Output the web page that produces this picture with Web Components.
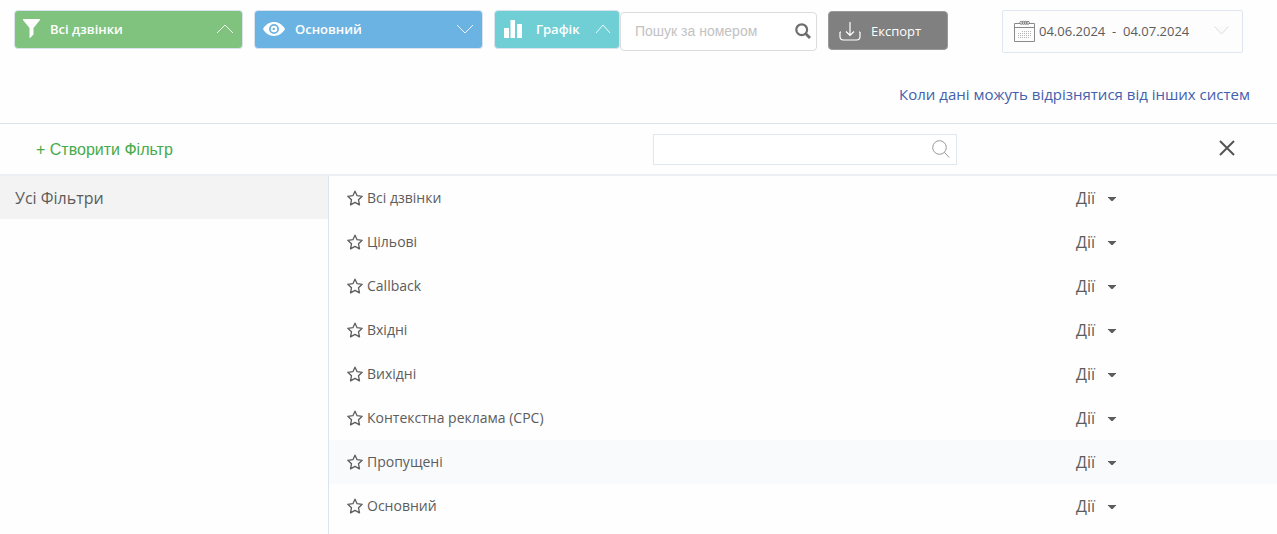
<!DOCTYPE html>
<html lang="uk">
<head>
<meta charset="utf-8">
<meta name="viewport" content="width=device-width, initial-scale=1">
<title>Дзвінки</title>
<style>
  html, body { margin: 0; background: #fefefe; }
  body { font-family: "Open Sans", "Noto Sans", sans-serif; color: #5c5c5c; }
</style>
</head>
<body>
<calls-page></calls-page>

<script>
  class BaseElement extends HTMLElement {
    connectedCallback() {
      if (this.shadowRoot) return;
      this.attachShadow({ mode: 'open' }).innerHTML =
        '<style>*{box-sizing:border-box}button,input{font:inherit;color:inherit;margin:0}svg{display:block;flex:none}</style>' + this.render();
    }
  }

  /* Coloured drop-down button of the toolbar */
  customElements.define('toolbar-toggle', class extends BaseElement {
    render() {
      const up = this.getAttribute('direction') === 'up';
      const small = this.hasAttribute('compact');
      const w = small ? 16 : 18;
      const d = up ? `M1 9 L${w / 2} 1 L${w - 1} 9` : `M1 1 L${w / 2} 9 L${w - 1} 1`;
      return `
      <style>
        :host { display: block; }
        button { display: flex; align-items: center; gap: var(--gap, 12px); width: 100%; height: 39px; padding: 0 8px 2px;
          border: 1px solid #dbe3ef; border-radius: 4px; background: var(--fill); color: #fff;
          font-size: 13px; font-weight: 600; line-height: 20px; text-align: left; cursor: pointer; }
        .chevron { margin-left: auto; }
      </style>
      <button type="button" aria-expanded="${up}">
        <slot name="icon"></slot><span><slot></slot></span>
        <svg class="chevron" width="${w}" height="10" viewBox="0 0 ${w} 10" fill="none" stroke="#fff" stroke-width=".9"><path d="${d}"/></svg>
      </button>`;
    }
  });

  customElements.define('phone-search', class extends BaseElement {
    render() {
      return `
      <style>
        :host { display: block; }
        label { display: flex; align-items: center; height: 39px; padding: 0 5px 2px 14px; border: 1px solid #dcdcdc; border-radius: 4px; background: #fff; }
        input { flex: 1; min-width: 0; border: 0; padding: 0; outline: 0; background: none; font: 14px/20px "Liberation Sans", Arial, sans-serif; }
        input::placeholder { color: #c2c2c2; opacity: 1; }
      </style>
      <label>
        <input type="text" placeholder="Пошук за номером" aria-label="Пошук за номером">
        <svg width="16" height="16" viewBox="0 0 16 16" fill="none" stroke="#6e6e6e"><circle cx="6.7" cy="6.7" r="5.4" stroke-width="2.2"/><path d="M10.8 10.8 L15 15" stroke-width="2.8"/></svg>
      </label>`;
    }
  });

  customElements.define('export-button', class extends BaseElement {
    render() {
      return `
      <style>
        :host { display: block; }
        button { display: flex; align-items: center; gap: 10px; width: 100%; height: 39px; padding: 0 10px; border: 1px solid #999;
          border-radius: 4px; background: #808080; color: #fff; font-size: 13px; line-height: 20px; cursor: pointer; }
      </style>
      <button type="button">
        <svg width="22" height="20" viewBox="0 0 22 20" fill="none" stroke="#fff" stroke-width="1.2"><path d="M1 11 V15.5 Q1 19 4.5 19 H17.5 Q21 19 21 15.5 V11 M1 11 H2 M21 11 H20 M11 1 V14.5 M7 10.5 L11 14.5 L15 10.5"/></svg>
        <slot></slot>
      </button>`;
    }
  });

  customElements.define('date-range', class extends BaseElement {
    render() {
      let dots = '';
      for (let y = 11; y <= 17; y += 2)
        for (let x = 4; x <= 17; x += 2)
          if (!(y === 11 && x < 8) && !(y === 17 && x > 14)) dots += `<rect x="${x}" y="${y}" width="1" height="1"/>`;
      return `
      <style>
        :host { display: block; }
        button { display: flex; align-items: center; width: 100%; height: 43px; padding: 0 13px 2px 11px; gap: 4px;
          border: 1px solid #dfe7f0; border-radius: 2px; background: #fdfdfd; color: #5c5c5c; font-size: 13px; line-height: 20px; cursor: pointer; }
        span { white-space: pre; }
        .arrow { margin-left: auto; }
      </style>
      <button type="button">
        <svg width="21" height="22" viewBox="0 0 21 22" fill="none" stroke="#8a8a8a"><path d="M.5 3.5 H6 M15 3.5 H20.5 V21.5 H.5 V3.5 M.5 7.5 H20.5"/><g stroke="#777" stroke-width=".9"><circle cx="7.3" cy="2.8" r="1.5"/><circle cx="9.5" cy="2.8" r="1.5"/><circle cx="11.7" cy="2.8" r="1.5"/><circle cx="13.9" cy="2.8" r="1.5"/></g><g fill="#b5b5b5" stroke="none">${dots}</g></svg>
        <span><slot></slot></span>
        <svg class="arrow" width="15" height="9" viewBox="0 0 15 9" fill="#fafafa" stroke="#ddd"><path d="M.5 .5 L7.5 8 L14.5 .5" /></svg>
      </button>`;
    }
  });

  customElements.define('calls-toolbar', class extends BaseElement {
    render() {
      return `
      <style>
        :host { display: block; padding: 10px 34px 0 14px; }
        .bar { display: flex; align-items: flex-start; }
        .wide { width: 229px; margin-right: 11px; }
        .filter { --fill: #7fc37f; --gap: 10px; }
        .view { --fill: #6bb3e2; --gap: 10px; }
        .chart { --fill: #6fcfd5; --gap: 14px; width: 126px; }
        phone-search { width: 197px; margin-top: 2px; }
        export-button { width: 120px; margin: 1px 0 0 11px; }
        date-range { width: 241px; margin-left: auto; }
      </style>
      <div class="bar">
        <toolbar-toggle class="wide filter" direction="up">
          <svg slot="icon" width="17" height="19" viewBox="0 0 17 19" fill="#fff"><path d="M0 0 H17 V1 L10.5 9 V15.5 L7 19 H6.5 V9 L0 1 Z"/></svg>Всі дзвінки
        </toolbar-toggle>
        <toolbar-toggle class="wide view" direction="down">
          <svg slot="icon" width="22" height="14" viewBox="0 0 22 14"><path fill="#fff" fill-rule="evenodd" d="M0 7 C5 -2.3 17 -2.3 22 7 C17 16.3 5 16.3 0 7 Z M11 2 A5 5 0 1 0 11 12 A5 5 0 1 0 11 2 Z"/><circle cx="11" cy="7" r="3.2" fill="#fff"/><circle cx="10.7" cy="6.9" r="1.2" fill="#6bb3e2"/></svg>Основний
        </toolbar-toggle>
        <toolbar-toggle class="chart" direction="up" compact>
          <svg slot="icon" width="19" height="18" viewBox="0 0 19 18" fill="#fff"><path d="M1 8 H6 V18 H1 Z M7.5 0 H12 V18 H7.5 Z M14 4 H19 V18 H14 Z"/></svg>Графік
        </toolbar-toggle>
        <phone-search></phone-search>
        <export-button>Експорт</export-button>
        <date-range>04.06.2024  -  04.07.2024</date-range>
      </div>`;
    }
  });

  customElements.define('filter-header', class extends BaseElement {
    render() {
      return `
      <style>
        :host { display: grid; grid-template-columns: 333px 1fr 304px 1fr; align-items: center; height: 53px; box-sizing: border-box;
          border-top: 1px solid #dde3ec; border-bottom: 2px solid #ecf0f5; }
        .create { justify-self: start; margin-left: 36px; padding: 2px 0 0; border: 0; background: none; color: #46ab4b;
          font: 16px/20px "Liberation Sans", Arial, sans-serif; cursor: pointer; }
        label { grid-column: 3; display: flex; align-items: center; height: 31px; padding: 0 6px; border: 1px solid #dfe7ef; background: #fff; }
        input { flex: 1; min-width: 0; border: 0; padding: 0; outline: 0; background: none; font-size: 14px; }
        .close { justify-self: end; margin-right: 42px; padding: 0 0 2px; border: 0; background: none; cursor: pointer; }
      </style>
      <button type="button" class="create">+ Створити Фільтр</button>
      <label>
        <input type="text" aria-label="Пошук фільтра">
        <svg width="18" height="18" viewBox="0 0 18 18" fill="none" stroke="#999"><circle cx="7.5" cy="7.5" r="6.8"/><path d="M12.3 12.3 L17.3 17.5"/></svg>
      </label>
      <button type="button" class="close" aria-label="Закрити">
        <svg width="16" height="16" viewBox="0 0 16 16" stroke="#555" stroke-width="2"><path d="M1 1 L15 15 M15 1 L1 15"/></svg>
      </button>`;
    }
  });

  customElements.define('filter-row', class extends BaseElement {
    render() {
      return `
      <style>
        :host { display: flex; align-items: center; height: 44px; padding-left: 18px; }
        :host([active]) { background: #f9fafc; }
        button { padding: 0; border: 0; background: none; cursor: pointer; }
        .name { margin-left: 4px; font-size: 14px; line-height: 20px; }
        .actions { display: flex; align-items: center; gap: 13px; width: 201px; margin-left: auto; font-size: 16px; line-height: 20px; }
        .actions svg { margin-top: 2px; }
      </style>
      <button type="button" aria-label="До обраного">
        <svg width="16" height="16" viewBox="0 0 16 16" fill="none" stroke="#5c5c5c" stroke-width="1.3" stroke-linejoin="round"><path d="M8 1.2 L10.1 5.7 L15.2 6.3 L11.5 9.8 L12.5 14.9 L8 12.4 L3.5 14.9 L4.5 9.8 L.8 6.3 L5.9 5.7 Z"/></svg>
      </button>
      <span class="name"><slot></slot></span>
      <button type="button" class="actions" aria-haspopup="menu">Дії
        <svg width="8" height="4" viewBox="0 0 8 4" fill="#5c5c5c"><path d="M0 0 H8 V.6 L4.6 4 H3.4 L0 .6 Z"/></svg>
      </button>`;
    }
  });

  customElements.define('calls-page', class extends BaseElement {
    render() {
      const names = ['Всі дзвінки', 'Цільові', 'Callback', 'Вхідні', 'Вихідні', 'Контекстна реклама (CPC)', 'Пропущені', 'Основний'];
      return `
      <style>
        :host { display: flex; flex-direction: column; min-height: 100vh; }
        .note { display: flex; justify-content: flex-end; padding: 30px 27px 17px; font-size: 15px; line-height: 23px; }
        a { color: #4360ad; text-decoration: none; }
        .body { flex: 1; display: flex; }
        nav { width: 329px; box-sizing: border-box; border-right: 1px solid #dce5ee; }
        nav a { display: block; padding: 11px 15px 10px; background: #f3f3f3; color: #5c5c5c; font-size: 16px; line-height: 22px; }
        main { flex: 1; min-width: 0; }
      </style>
      <calls-toolbar></calls-toolbar>
      <div class="note"><a href="#">Коли дані можуть відрізнятися від інших систем</a></div>
      <filter-header></filter-header>
      <div class="body">
        <nav><a href="#">Усі Фільтри</a></nav>
        <main>${names.map(n => `<filter-row${n === 'Пропущені' ? ' active' : ''}>${n}</filter-row>`).join('')}</main>
      </div>`;
    }
  });
</script>
</body>
</html>
